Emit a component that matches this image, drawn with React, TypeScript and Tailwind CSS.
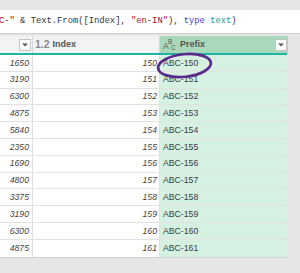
const ages = [1650, 3190, 6300, 4875, 5840, 2350, 1690, 4800, 3375, 3190, 6300, 4875]
const rows = ages.map((v, i) => ({ amount: v, index: 150 + i, prefix: `ABC-${150 + i}` }))

const sans = "font-['Liberation_Sans',Arial,sans-serif]"

function DropButton() {
  return (
    <div className="w-[12px] h-[12px] bg-white border border-[#c4c4c4] flex items-center justify-center">
      <svg width="6" height="4" viewBox="0 0 6 4">
        <polygon points="0,0.5 6,0.5 3,3.5" fill="#555" />
      </svg>
    </div>
  )
}

export default function App() {
  return (
    <div className={`relative w-[300px] h-[273px] overflow-hidden bg-[#e6e6e6] ${sans}`}>
      <div className="h-[10px]" />

      {/* formula bar */}
      <div className="h-[24px] bg-white border-b border-[#cfcfcf] flex items-center whitespace-pre font-['Liberation_Mono','Courier_New',monospace] text-[8.8px] text-[#333] -ml-px">
        <span className="text-[#a31515]">C-"</span>
        <span> &amp; Text.From([Index], </span>
        <span className="text-[#a31515]">"en-IN"</span>
        <span>), </span>
        <span className="text-[#3b3bd4]">type</span>
        <span> </span>
        <span className="text-[#2b9a8f]">text</span>
        <span>)</span>
      </div>

      <div className="h-[2px]" />

      {/* table */}
      <div className="w-[288px] border-r border-b border-[#d2d2d2] bg-white">
        <div className="grid grid-cols-[33px_127px_128px] h-[17px]">
          <div className="bg-[#f3f3f3] border-r border-[#d8d8d8] flex items-center justify-end pr-[1px]">
            <DropButton />
          </div>
          <div className="bg-[#f3f3f3] border-r border-[#d8d8d8] flex items-center pl-[2px] gap-[3px]">
            <span className="text-[10.5px] font-bold text-[#8a8a8a] leading-none">1.2</span>
            <span className="text-[9px] font-semibold text-[#555] leading-none">Index</span>
          </div>
          <div className="bg-[#aad8ba] flex items-center pl-[3px] pr-[1px]">
            <span className="relative w-[14px] h-[12px] text-[#555] leading-none">
              <span className="absolute left-0 top-[3px] text-[8.5px]">A</span>
              <span className="absolute left-[5px] top-0 text-[6.5px]">B</span>
              <span className="absolute left-[8px] top-[6px] text-[6.5px]">C</span>
            </span>
            <span className="ml-[3px] text-[9px] font-semibold text-[#555] leading-none">Prefix</span>
            <div className="ml-auto">
              <DropButton />
            </div>
          </div>
        </div>
        <div className="h-[2px] bg-[#20b5a0]" />

        {rows.map((r) => (
          <div key={r.index} className="grid grid-cols-[33px_127px_128px] h-[16.8px] border-b border-[#e2e2e2] last:border-b-0 text-[8.7px] leading-none">
            <div className="border-r border-[#e0e0e0] flex items-center justify-end pr-[3px] italic text-[#444]">
              {r.amount}
            </div>
            <div className="border-r border-[#e0e0e0] flex items-center justify-end pr-[2px] italic text-[#444]">
              {r.index}
            </div>
            <div className="bg-[#d6f0e2] flex items-center pl-[3px] text-[#3c3c3c]">
              {r.prefix}
            </div>
          </div>
        ))}
      </div>

      {/* annotation */}
      <svg className="absolute left-0 top-0 pointer-events-none" width="300" height="273">
        <ellipse cx="184.5" cy="65.5" rx="26.5" ry="11.3" transform="rotate(-6 184.5 65.5)" fill="none" stroke="#5b2a8c" strokeWidth="2.7" />
      </svg>
    </div>
  )
}
